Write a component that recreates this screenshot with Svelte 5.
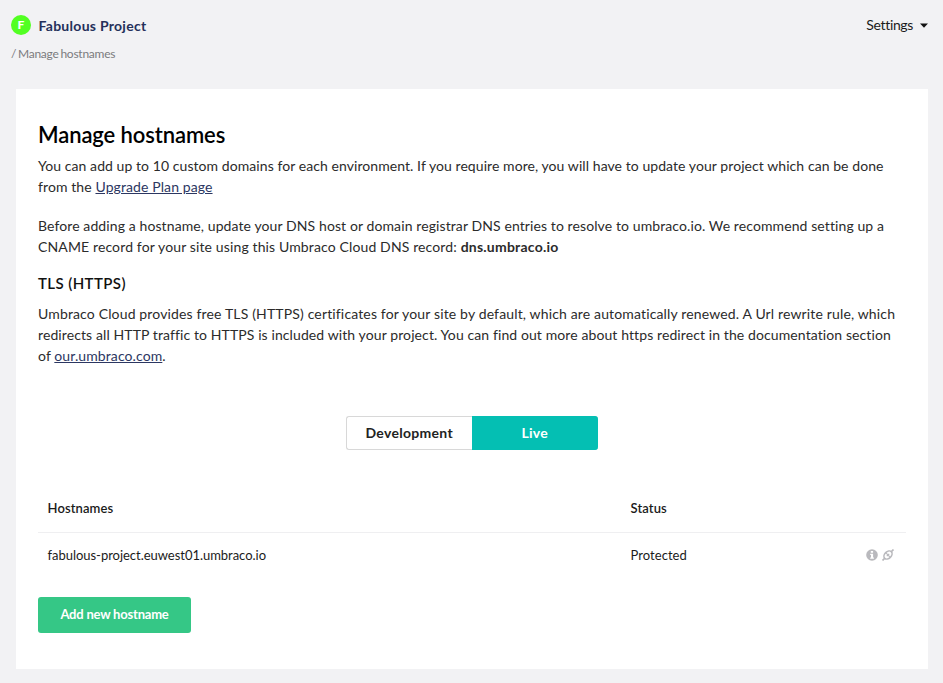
<script>
  let environment = $state('Live');
  const environments = ['Development', 'Live'];
  const hostnames = [{ name: 'fabulous-project.euwest01.umbraco.io', status: 'Protected' }];
</script>

<div class="page">
  <header>
    <div class="project">
      <div class="title"><span class="avatar">F</span><span class="name">Fabulous Project</span></div>
      <nav class="crumb">/ Manage hostnames</nav>
    </div>
    <div class="settings">
      <span>Settings</span>
      <svg width="8" height="5" viewBox="0 0 8 5"><path d="M0 .5h8L4 4.800z" fill="#111" /></svg>
    </div>
  </header>

  <main>
    <h1>Manage hostnames</h1>
    <p class="intro"><span class="tight">You can add up to 10 custom domains for each environment. If you require more, you will have to update your project which can be done</span><br /><span>from the <a href="#upgrade">Upgrade Plan page</a></span></p>
    <p class="dns"><span>Before adding a hostname, update your DNS host or domain registrar DNS entries to resolve to umbraco.io. We recommend setting up a</span><br /><span class="record">CNAME record for your site using this Umbraco Cloud DNS record: <b>dns.umbraco.io</b></span></p>
    <h2>TLS (HTTPS)</h2>
    <p class="tls"><span class="loose">Umbraco Cloud provides free TLS (HTTPS) certificates for your site by default, which are automatically renewed. A Url rewrite rule, which</span><br /><span>redirects all HTTP traffic to HTTPS is included with your project. You can find out more about https redirect in the documentation section</span><br /><span>of <a href="#our">our.umbraco.com</a>.</span></p>

    <div class="tabs">
      {#each environments as item}
        <button class:active={environment === item} onclick={() => (environment = item)}>{item}</button>
      {/each}
    </div>

    <div class="table">
      <div class="row head"><span class="host">Hostnames</span><span>Status</span></div>
      {#each hostnames as host}
        <div class="row">
          <span class="host name-cell">{host.name}</span><span class="status">{host.status}</span>
          <span class="icons">
            <svg width="12" height="12" viewBox="0 0 12 12">
              <circle cx="6" cy="6" r="5.800" fill="#b9b9bd" />
              <path d="M4.800 2h2.300v1.800H4.800zM4.200 4.800h2.900v3.700h.8v1.200H4.200V8.500h.8V6h-.8z" fill="#fff" />
            </svg>
            <svg width="12" height="12" viewBox="0 0 12 12" fill="none" stroke="#b9b9bd">
              <path d="M.5 11.500 2.500 9.500M9.500 2.500l2-2" stroke-width="1.700" />
              <ellipse cx="6" cy="6" rx="4.700" ry="3.300" transform="rotate(-45 6 6)" stroke-width="1.600" />
              <path d="M4.200 4.200 7.800 7.800M4.800 7.200 7.200 4.800" stroke-width="1.200" />
            </svg>
          </span>
        </div>
      {/each}
    </div>

    <button class="add">Add new hostname</button>
  </main>
</div>

<style>
  :global(body) { margin: 0; background: #f2f2f4; }
  .page {
    box-sizing: border-box;
    width: 943px;
    height: 683px;
    padding: 0 15px 0 16px;
    background: #f2f2f4;
    color: #1b1b1b;
    font-family: Lato, "Liberation Sans", sans-serif;
    font-size: 14px;
    line-height: 21px;
    white-space: nowrap;
    overflow: hidden;
  }
  header { display: flex; justify-content: space-between; height: 89px; }
  .project { margin-left: -5px; padding-top: 15px; }
  .title { display: flex; align-items: center; height: 20px; }
  .avatar {
    width: 20px; height: 20px; border-radius: 50%;
    background: #52ff22; color: #fff;
    font: 900 12px/20px Lato, sans-serif; text-align: center;
  }
  .name { margin: 0 0 0 7.500px; color: #25305a; font-weight: 700; letter-spacing: .28px; }
  .crumb { margin-top: 8px; color: #7b7b7e; font-size: 12px; word-spacing: -1px; letter-spacing: -.25px; }
  .settings { display: flex; align-items: center; gap: 7px; height: 21px; margin-top: 14px; letter-spacing: -.35px; }
  .settings svg { margin-top: 2px; }
  main { box-sizing: border-box; height: 580px; padding: 33px 22px 0; background: #fff; }
  h1 { margin: 0; font-size: 22px; line-height: 26px; font-weight: 600; letter-spacing: -.1px; color: #000; }
  p { margin: 0; letter-spacing: .1px; color: #2b2b2b; }
  .tight { letter-spacing: .068px; }
  .loose { letter-spacing: .148px; }
  .record { letter-spacing: .13px; }
  b { letter-spacing: .23px; }
  .intro { margin-top: 7px; }
  .dns { margin-top: 18px; }
  h2 { margin: 16px 0 0; font-size: 15px; line-height: 20px; font-weight: 600; letter-spacing: .4px; color: #111; }
  .tls { margin-top: 10px; }
  a { color: #2c3762; text-decoration: underline; }
  button { padding: 0; border: 0; font-family: inherit; cursor: pointer; }
  .tabs { display: flex; width: 252px; height: 34px; margin: 50px auto 0; }
  .tabs button {
    flex: 1; border: 1px solid #d8d8d8; border-right: 0; border-radius: 3px 0 0 3px; padding-bottom: 2px;
    background: #fff; color: #222; font-size: 14px; font-weight: 700; letter-spacing: .3px;
  }
  .tabs button:last-child { border-radius: 0 3px 3px 0; padding-right: 1px; }
  .tabs button.active { border-color: #04bfb3; background: #04bfb3; color: #fff; }
  .table { width: 868px; margin-top: 35px; font-size: 13px; }
  .row { display: flex; align-items: center; box-sizing: border-box; height: 46px; padding: 0 12.500px 1px 9.500px; }
  .head { height: 48px; padding-bottom: 0; border-bottom: 1px solid #efeff1; font-weight: 600; letter-spacing: .1px; }
  .host { width: 583px; }
  .name-cell { letter-spacing: -.03px; }
  .status { letter-spacing: .05px; }
  .icons { display: flex; gap: 4px; margin: 0 0 1px auto; }
  .add {
    width: 153px; height: 36px; margin-top: 18px; border-radius: 3px; padding-bottom: 2px;
    background: #35c786; color: #fff; font-size: 13px; font-weight: 700; letter-spacing: -.2px;
  }
</style>
